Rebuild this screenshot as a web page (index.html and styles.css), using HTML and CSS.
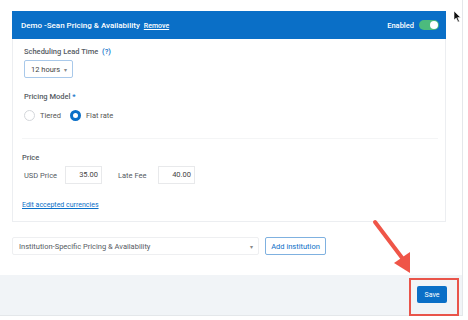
FILE: index.html
```html
<!DOCTYPE html>
<html lang="en">
<head>
  <meta charset="UTF-8">
  <meta name="viewport" content="width=device-width, initial-scale=1.0">
  <title>Pricing &amp; Availability</title>
  <link rel="stylesheet" href="styles.css">
</head>
<body>
  <div class="page">
    <div class="content">
      <div class="card">
        <div class="card-header">
          <div class="card-title">
            Demo -Sean Pricing &amp; Availability
            <a href="#" class="remove">Remove</a>
          </div>
          <div class="enabled">
            <span>Enabled</span>
            <span class="toggle"><span class="knob"></span></span>
          </div>
        </div>
        <div class="card-body">
          <div class="label indent">Scheduling Lead Time <span class="help">(?)</span></div>
          <div class="select lead indent">12 hours <span class="caret">&#9662;</span></div>

          <div class="label indent model">Pricing Model <span class="req">*</span></div>
          <div class="radios indent">
            <label class="radio"><span class="dot"></span>Tiered</label>
            <label class="radio"><span class="dot checked"></span>Flat rate</label>
          </div>

          <hr class="divider">

          <div class="label price-title">Price</div>
          <div class="price-row indent">
            <span class="price-label">USD Price</span>
            <span class="amount">35.00</span>
            <span class="price-label fee">Late Fee</span>
            <span class="amount">40.00</span>
          </div>

          <a href="#" class="currencies">Edit accepted currencies</a>
        </div>
      </div>

      <div class="institution-row">
        <div class="select institution">Institution-Specific Pricing &amp; Availability <span class="caret">&#9662;</span></div>
        <button class="add-btn">Add institution</button>
      </div>
    </div>

    <div class="footer">
      <button class="save-btn">Save</button>
    </div>
  </div>

  <!-- annotation drawn over the screenshot -->
  <div class="highlight"></div>
  <svg class="arrow" width="50" height="60" viewBox="0 0 50 60">
    <line x1="6" y1="4" x2="37" y2="45" stroke="#ef5548" stroke-width="4" stroke-linecap="round"/>
    <polygon points="25,45 41,55 41,34" fill="#ef5548"/>
  </svg>
  <svg class="cursor" width="8" height="12" viewBox="0 0 8 12">
    <polygon points="0,0 0,9 2.2,7 4,11 5.4,10.4 3.7,6.6 6.6,6.6" fill="#111" stroke="#fff" stroke-width="0.6"/>
  </svg>
</body>
</html>
```

FILE: styles.css
```css
body {
  margin: 0;
  font-family: Roboto, "Liberation Sans", sans-serif;
  background: #fff;
  color: #555b63;
}
.page {
  position: relative;
  width: 463px;
  height: 316px;
  border-right: 1px solid #e4e7ea;
  border-bottom: 1px solid #e4e7ea;
  box-sizing: border-box;
  display: flex;
  flex-direction: column;
}
.content {
  padding: 11px 16px 0 12px;
  flex: 1;
}
.card-header {
  background: #0a6fc7;
  height: 28px;
  display: flex;
  align-items: center;
  justify-content: space-between;
  padding: 0 7px 0 9px;
  color: #fff;
}
.card-title {
  font-size: 8px;
  font-weight: 500;
}
.remove {
  color: #fff;
  font-size: 7px;
  margin-left: 2px;
}
.enabled {
  display: flex;
  align-items: center;
  font-size: 7.5px;
  font-weight: 500;
}
.toggle {
  width: 20px;
  height: 10px;
  border-radius: 5px;
  background: #4cbb7d;
  margin-left: 5px;
  position: relative;
}
.knob {
  position: absolute;
  right: 1px;
  top: 1px;
  width: 8px;
  height: 8px;
  border-radius: 50%;
  background: #fff;
}
.card-body {
  border: 1px solid #eceef1;
  border-top: none;
  padding: 8px 7px 11px 9px;
}
.indent {
  margin-left: 2px;
}
.label {
  font-size: 7.5px;
  font-weight: 500;
  line-height: 10px;
  color: #555b63;
}
.help {
  color: #0a6fc7;
  margin-left: 2px;
}
.req {
  color: #0a6fc7;
}
.select {
  display: flex;
  align-items: center;
  justify-content: space-between;
  box-sizing: border-box;
  height: 18px;
  font-size: 7.5px;
  color: #444;
  border-radius: 2px;
}
.lead {
  width: 49px;
  margin-top: 3px;
  padding: 0 5px 0 6px;
  border: 1px solid #a9c9ea;
}
.caret {
  font-size: 6px;
  color: #888;
}
.model {
  margin-top: 14px;
}
.radios {
  display: flex;
  gap: 9px;
  margin-top: 8px;
  font-size: 7.5px;
  color: #555;
}
.radio {
  display: flex;
  align-items: center;
}
.dot {
  width: 9px;
  height: 9px;
  border: 1px solid #d4d7db;
  border-radius: 50%;
  margin-right: 5px;
  box-sizing: content-box;
}
.dot.checked {
  border: 3px solid #0a6fc7;
  width: 5px;
  height: 5px;
  background: #fff;
}
.divider {
  border: none;
  border-top: 1px solid #f4f5f6;
  margin: 17px 0 0 0;
}
.price-title {
  margin-top: 14px;
}
.price-row {
  display: flex;
  align-items: center;
  margin-top: 3px;
  font-size: 7.5px;
}
.price-label {
  width: 41px;
}
.fee {
  width: 40px;
  margin-left: 16px;
}
.amount {
  width: 37px;
  height: 18px;
  box-sizing: border-box;
  border: 1px solid #e8e9eb;
  text-align: right;
  line-height: 16px;
  padding-right: 3px;
  color: #444;
}
.currencies {
  display: block;
  margin-top: 16px;
  font-size: 7px;
  line-height: 10px;
  color: #0a6fc7;
}
.institution-row {
  display: flex;
  margin-top: 15px;
  gap: 6px;
}
.institution {
  width: 247px;
  padding: 0 5px 0 6px;
  border: 1px solid #eeeff1;
  color: #555b63;
}
.add-btn {
  height: 18px;
  width: 61px;
  padding: 0;
  border: 1px solid #7fb1e0;
  border-radius: 2px;
  background: #fff;
  color: #0a6fc7;
  font-family: inherit;
  font-size: 7.5px;
}
.footer {
  height: 40px;
  background: #f1f4f7;
  display: flex;
  justify-content: flex-end;
  align-items: flex-start;
  padding: 11px 15px 0 0;
  box-sizing: border-box;
}
.save-btn {
  width: 30px;
  height: 17px;
  padding: 0;
  border: none;
  border-radius: 2px;
  background: #0a6fc7;
  color: #fff;
  font-family: inherit;
  font-size: 7px;
}
.highlight {
  position: absolute;
  left: 409px;
  top: 278px;
  width: 46px;
  height: 34px;
  border: 2px solid #e9544a;
}
.arrow {
  position: absolute;
  left: 369px;
  top: 218px;
}
.cursor {
  position: absolute;
  left: 454px;
  top: 11px;
}
```
